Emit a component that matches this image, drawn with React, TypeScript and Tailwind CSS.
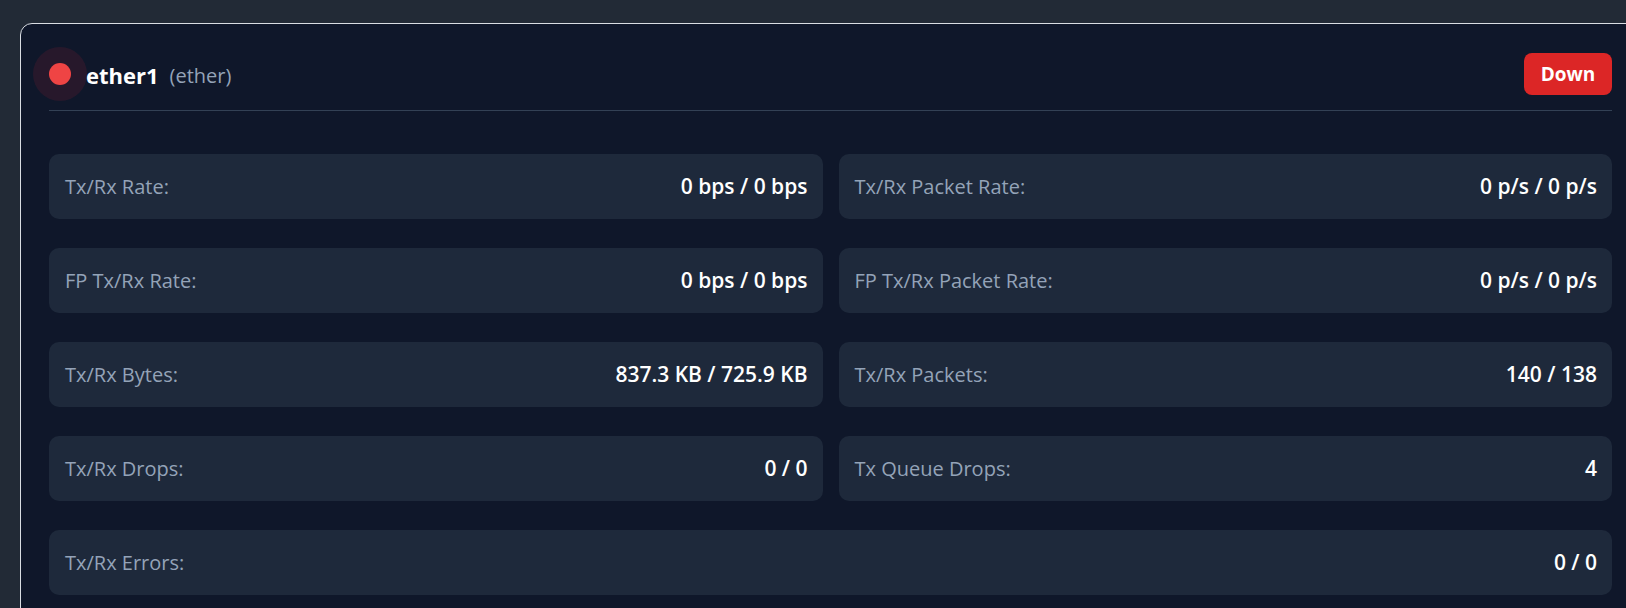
import React from "react";

type Stat = { label: string; value: string; wide?: boolean };

const stats: Stat[] = [
  { label: "Tx/Rx Rate:", value: "0 bps / 0 bps" },
  { label: "Tx/Rx Packet Rate:", value: "0 p/s / 0 p/s" },
  { label: "FP Tx/Rx Rate:", value: "0 bps / 0 bps" },
  { label: "FP Tx/Rx Packet Rate:", value: "0 p/s / 0 p/s" },
  { label: "Tx/Rx Bytes:", value: "837.3 KB / 725.9 KB" },
  { label: "Tx/Rx Packets:", value: "140 / 138" },
  { label: "Tx/Rx Drops:", value: "0 / 0" },
  { label: "Tx Queue Drops:", value: "4" },
  { label: "Tx/Rx Errors:", value: "0 / 0", wide: true },
];

const StatBox = ({ label, value, wide }: Stat) => (
  <div
    className={`flex h-[65px] items-center justify-between rounded-[10px] bg-[#1e293b] pl-4 pr-[15px] ${
      wide ? "col-span-2" : ""
    }`}
  >
    <span className="text-[20px] text-[#94a3b8]">{label}</span>
    <span className="text-[21px] font-semibold text-white">{value}</span>
  </div>
);

export default function App() {
  return (
    <div
      className="h-[608px] w-full overflow-hidden bg-[#222a36] pl-5 pt-[23px]"
      style={{ fontFamily: '"Open Sans", "Noto Sans", sans-serif' }}
    >
      {/* interface card */}
      <div className="w-[1621px] rounded-t-[12px] border border-[#d9dde3] bg-[#0f172a] px-[28px] pt-[29px] pb-8">
        <div className="flex items-center justify-between border-b border-[#334155] pb-[15px]">
          <div className="flex items-center">
            <span className="relative flex h-[22px] w-[22px] items-center justify-center">
              <span className="absolute h-[54px] w-[54px] rounded-full bg-red-500/10" />
              <span className="relative h-[22px] w-[22px] rounded-full bg-[#ef4444]" />
            </span>
            <span className="ml-[15px] mt-[3px] text-[22px] font-bold text-white">ether1</span>
            <span className="ml-[11px] mt-[4px] text-[20px] text-[#94a3b8]">(ether)</span>
          </div>
          <span className="flex h-[42px] w-[88px] items-center justify-center rounded-[8px] bg-[#dc2626] text-[19px] font-bold text-white">
            Down
          </span>
        </div>

        <div className="mt-[43px] grid grid-cols-2 gap-x-4 gap-y-[29px]">
          {stats.map((s) => (
            <StatBox key={s.label} {...s} />
          ))}
        </div>
      </div>
    </div>
  );
}
